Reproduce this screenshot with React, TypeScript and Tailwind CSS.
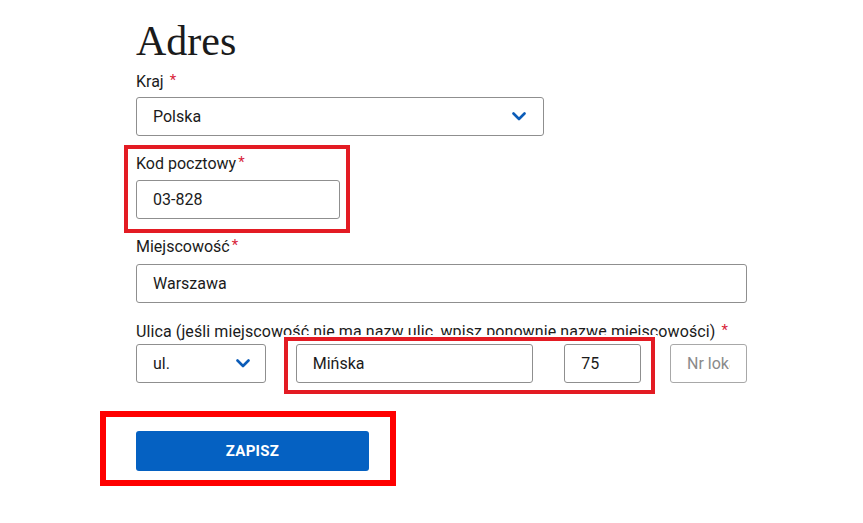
import React from "react";

const Chevron = () => (
  <svg width="14" height="9" viewBox="0 0 14 9" className="shrink-0">
    <polyline points="1.5,1.5 7,7 12.5,1.5" fill="none" stroke="#0b5cb8" strokeWidth="2.6" strokeLinecap="round" strokeLinejoin="round" />
  </svg>
);

const Star = () => <span className="text-[#d81e3a] text-[15px] relative -top-[2px] ml-[2px]">*</span>;

export default function App() {
  return (
    <div className="relative w-[863px] h-[523px] bg-white overflow-hidden" style={{ fontFamily: "Roboto, 'Liberation Sans', sans-serif" }}>
      <div className="ml-[136px] w-[611px] flex flex-col text-[#1b1b1b]">
        <h1 className="pt-[16px] h-[66px] text-[42px] leading-[50px] text-[#1b1b1b]" style={{ fontFamily: "'Liberation Serif', 'DejaVu Serif', serif" }}>
          Adres
        </h1>
        <div className="mt-[4px] h-[24px] text-[16px] leading-[24px]">
          Kraj <span className="text-[#d81e3a] text-[15px] relative -top-[2px] ml-[2px]">*</span>
        </div>
        <div className="mt-[3px] h-[39px] w-[408px] border border-[#8f8f8f] rounded-[3px] flex items-center justify-between pl-[16px] pr-[17px] text-[16px]">
          <span>Polska</span>
          <Chevron />
        </div>

        <div className="mt-[16px] h-[24px] text-[16px] leading-[24px]">
          Kod pocztowy<Star />
        </div>
        <div className="mt-[4px] h-[39px] w-[204px] border border-[#8f8f8f] rounded-[3px] flex items-center pl-[16px] text-[16px]">
          03-828
        </div>

        <div className="mt-[16px] h-[24px] text-[16px] leading-[24px]">
          Miejscowość<Star />
        </div>
        <div className="mt-[5px] h-[39px] w-[611px] border border-[#8f8f8f] rounded-[3px] flex items-center pl-[16px] text-[16px]">
          Warszawa
        </div>

        <div className="mt-[17px] h-[24px] text-[16px] leading-[24px] whitespace-nowrap tracking-[0.1px]">
          Ulica (jeśli miejscowość nie ma nazw ulic, wpisz ponownie nazwę miejscowości) <Star />
        </div>
        <div className="mt-0 flex h-[39px]">
          <div className="w-[130px] h-full border border-[#8f8f8f] rounded-[3px] flex items-center justify-between pl-[16px] pr-[15px] text-[16px]">
            <span>ul.</span>
            <Chevron />
          </div>
          <div className="ml-[30px] w-[238px] h-full border border-[#8f8f8f] rounded-[3px] flex items-center pl-[16px] text-[16px]">
            Mińska
          </div>
          <div className="ml-[31px] w-[77px] h-full border border-[#8f8f8f] rounded-[3px] flex items-center pl-[16px] text-[16px]">
            75
          </div>
          <input
            placeholder="Nr lokalu"
            className="ml-[29px] w-[77px] h-full border border-[#a8a8a8] rounded-[3px] px-[16px] text-[16px] placeholder-[#8a8a8a] outline-none"
            style={{ fontFamily: "Roboto, 'Liberation Sans', sans-serif" }}
          />
        </div>

        <button className="mt-[48px] w-[233px] h-[40px] rounded-[3px] bg-[#0561c2] text-white text-[15px] font-bold tracking-[0.3px]">
          ZAPISZ
        </button>
      </div>

      {/* annotation boxes */}
      <div className="absolute left-[124px] top-[145px] w-[226px] h-[88px] border-[4px] border-[#e31b23]" />
      <div className="absolute left-[284px] top-[337px] w-[371px] h-[57px] border-[4px] border-[#e31b23] shadow-[0_0_0_2px_#ffffff]" />
      <div className="absolute left-[100px] top-[411px] w-[296px] h-[75px] border-[6px] border-[#ff0000]" />
    </div>
  );
}
